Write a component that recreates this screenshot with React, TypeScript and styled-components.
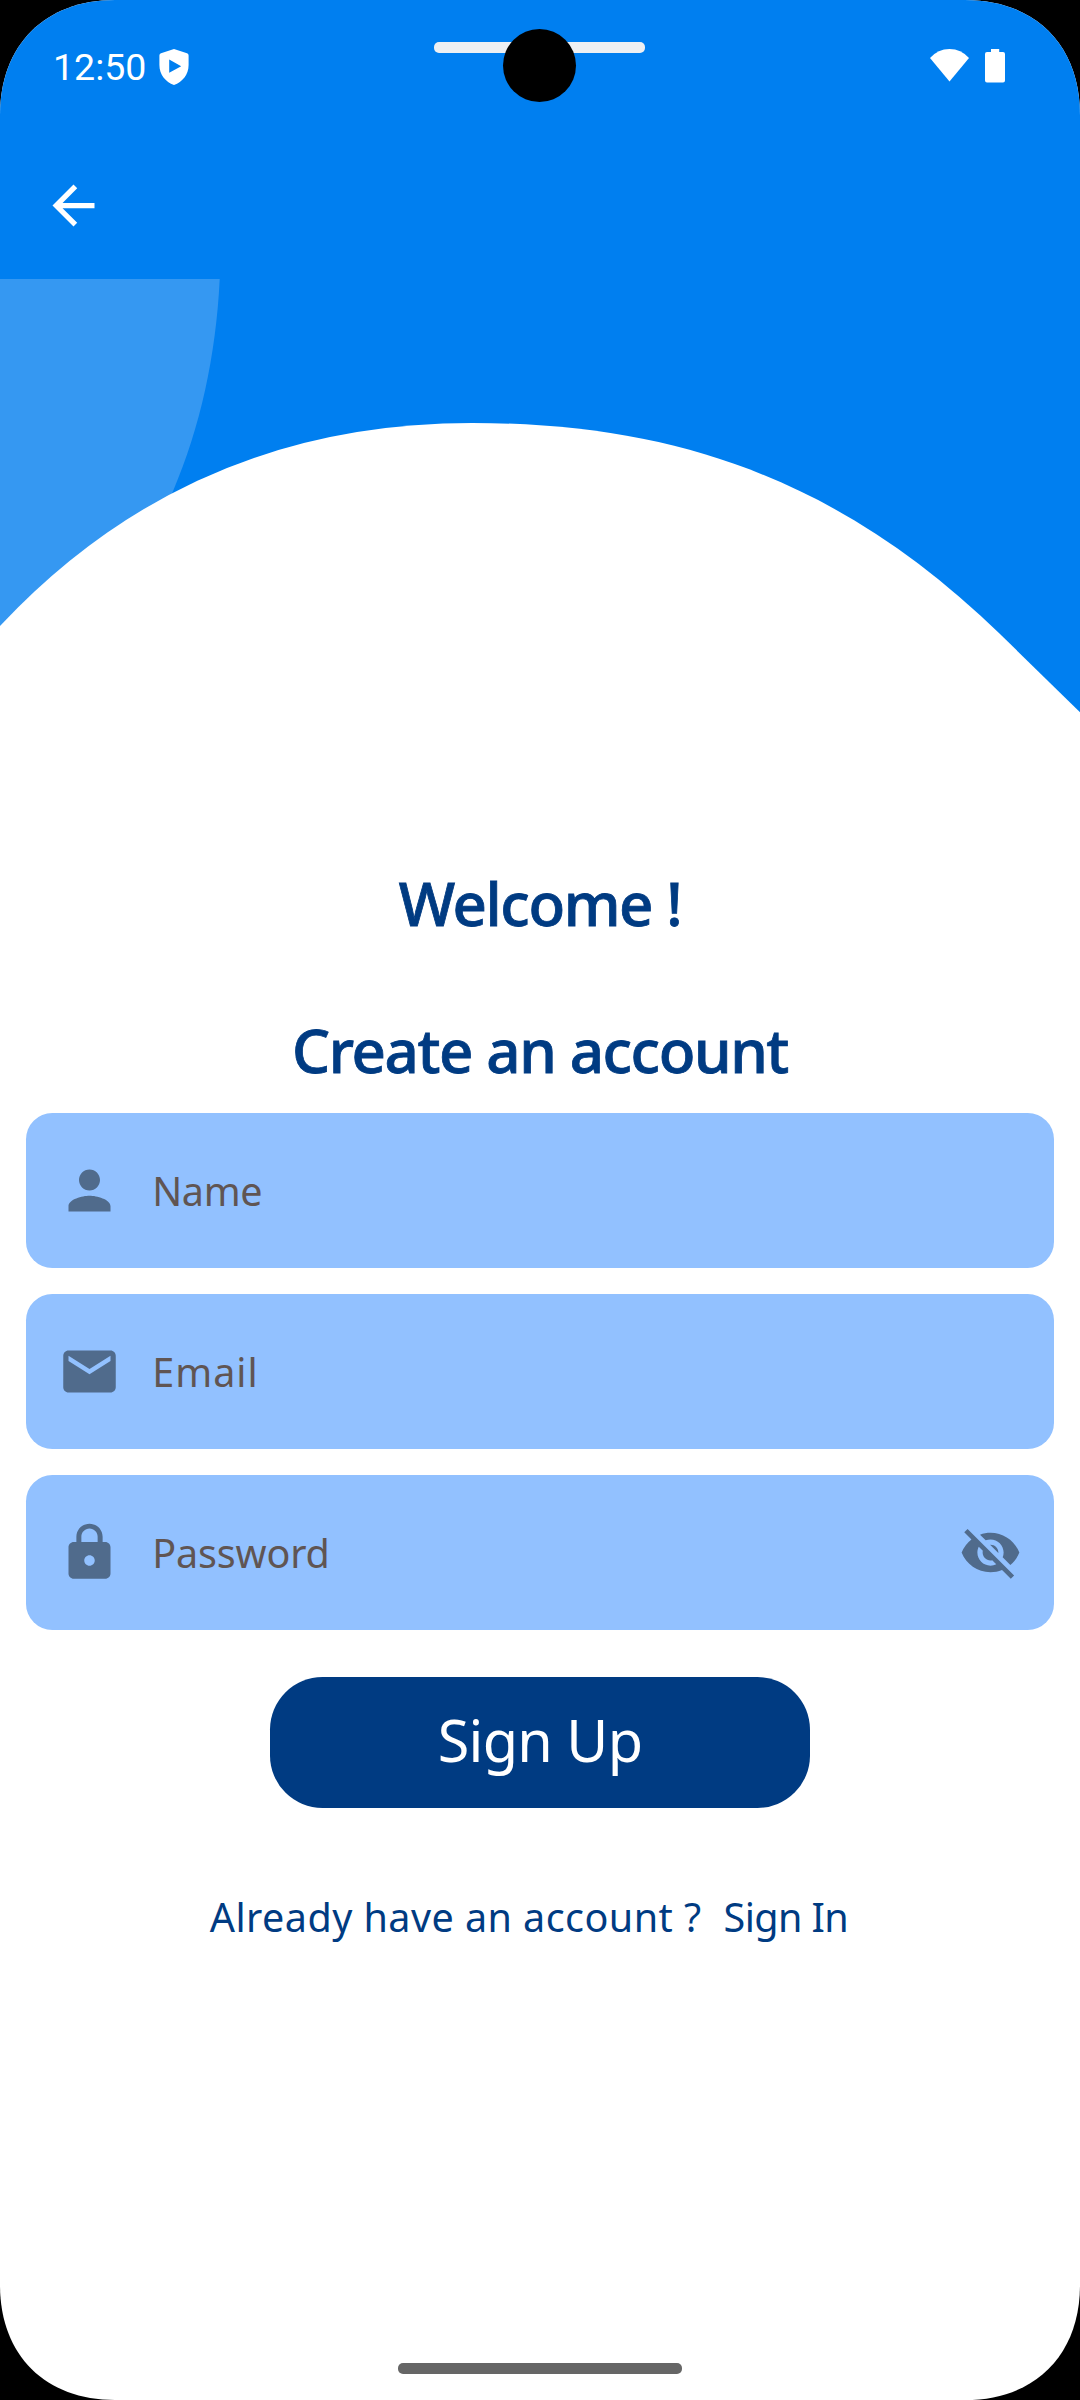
import React from "react";
import styled, { createGlobalStyle } from "styled-components";
import { MdArrowBack, MdPerson, MdEmail, MdLock, MdVisibilityOff } from "react-icons/md";

const color = {
  blue: "#007ff0",
  bubble: "#3598f2",
  navy: "#003b82",
  field: "#92c1ff",
  icon: "#506b8c",
  hint: "#605553",
};

const GlobalStyle = createGlobalStyle`
  *, *::before, *::after { box-sizing: border-box; }
  body { margin: 0; background: #000; }
`;

const Screen = styled.div`
  position: relative;
  display: flex;
  flex-direction: column;
  width: 1080px;
  height: 2400px;
  overflow: hidden;
  background: #fff;
  font-family: "Noto Sans", "Open Sans", sans-serif;
  clip-path: path("M115 0H965C1035 0 1080 45 1080 115V2285C1080 2355 1035 2400 965 2400H115C45 2400 0 2355 0 2285V115C0 45 45 0 115 0Z");
`;

const StatusBar = styled.header`
  display: flex;
  align-items: center;
  justify-content: space-between;
  height: 131px;
  padding: 0 75px 0 53px;
  background: ${color.blue};
`;

const StatusGroup = styled.div<{ $gap: number }>`
  display: flex;
  align-items: center;
  gap: ${(p) => p.$gap}px;
`;

const Clock = styled.span`
  padding-top: 2px;
  font: 400 37.5px/44px Roboto, sans-serif;
  color: #fff;
`;

const ShieldIcon = styled.svg`
  margin-top: 3px;
`;

const Speaker = styled.div`
  position: absolute;
  top: 42px;
  left: 434px;
  width: 211px;
  height: 11px;
  border-radius: 5px;
  background: #eef0f3;
`;

const Camera = styled.div`
  position: absolute;
  top: 29px;
  left: 503.3px;
  width: 73px;
  height: 73px;
  border-radius: 50%;
  background: #000;
`;

const AppBar = styled.nav`
  display: flex;
  align-items: center;
  height: 148px;
  padding-left: 42px;
  background: ${color.blue};
  color: #fff;
`;

const Wave = styled.svg`
  display: block;
  flex: none;
`;

const Content = styled.main`
  display: flex;
  flex-direction: column;
  align-items: center;
  padding: 149px 26.25px 0;
`;

const Title = styled.h1`
  margin: 0 0 65px;
  font-size: 60px;
  line-height: 82px;
  font-weight: 500;
  letter-spacing: -1.4px;
  -webkit-text-stroke: 0.8px ${color.navy};
  white-space: pre;
  color: ${color.navy};

  & + & {
    margin-bottom: 21.5px;
  }
`;

const Fields = styled.div`
  display: flex;
  flex-direction: column;
  gap: 26.2px;
  width: 100%;
`;

const FieldBox = styled.div`
  display: flex;
  align-items: center;
  height: 155px;
  border-radius: 26.25px;
  background: ${color.field};
  color: ${color.icon};
`;

const IconSlot = styled.div`
  display: flex;
  align-items: center;
  justify-content: center;
  width: 126px;
`;

const Hint = styled.span<{ $tracking: number }>`
  flex: 1;
  padding-top: 1px;
  font-size: 39.5px;
  line-height: 54px;
  letter-spacing: ${(p) => p.$tracking}px;
  color: ${color.hint};
`;

const SubmitButton = styled.button`
  width: 540px;
  height: 131.25px;
  margin-top: 47px;
  padding: 0 0 6px;
  border: 0;
  border-radius: 52.5px;
  background: ${color.navy};
  color: #fff;
  font-family: inherit;
  font-size: 57.5px;
  line-height: 78px;
  letter-spacing: -0.7px;
`;

const Footer = styled.div`
  display: flex;
  gap: 22px;
  align-self: flex-start;
  margin: 82px 0 0 183.5px;
  font-size: 39.5px;
  line-height: 54px;
  color: ${color.navy};
`;

const FooterText = styled.span<{ $tracking: number }>`
  letter-spacing: ${(p) => p.$tracking}px;
  white-space: pre;
`;

const HomeHandle = styled.div`
  align-self: center;
  width: 284px;
  height: 11px;
  margin: auto 0 26px;
  border-radius: 5px;
  background: #666;
`;

type FieldProps = {
  icon: React.ReactNode;
  label: string;
  tracking: number;
  trailing?: React.ReactNode;
};

const Field = ({ icon, label, tracking, trailing }: FieldProps) => (
  <FieldBox>
    <IconSlot>{icon}</IconSlot>
    <Hint $tracking={tracking}>{label}</Hint>
    {trailing && <IconSlot>{trailing}</IconSlot>}
  </FieldBox>
);

export default function App() {
  return (
    <>
      <GlobalStyle />
      <Screen>
        <StatusBar>
          <StatusGroup $gap={13}>
            <Clock>12:50</Clock>
            <ShieldIcon width="30" height="36" viewBox="0 0 30 36">
              <path
                fill="#fff"
                fillRule="evenodd"
                d="M15 0L28 4.2Q29.6 4.8 29.6 6.5V16C29.6 25.5 23.5 33 15 36C6.500 33 .4 25.500 .4 16V6.500Q.4 4.800 2 4.200ZM10.200 10.500V23.700L22.200 17.200Z"
              />
            </ShieldIcon>
          </StatusGroup>
          <StatusGroup $gap={16}>
            <svg width="39" height="33" viewBox="0 0 39 33">
              <path fill="#fff" d="M0 9Q8 0 19.500 0T39 9L19.500 32.500Z" />
            </svg>
            <svg width="20" height="34" viewBox="0 0 20 34">
              <path
                fill="#fff"
                d="M6 0H14.200V3H18Q20 3 20 5V31.500Q20 33.500 18 33.500H2Q0 33.500 0 31.500V5Q0 3 2 3H6Z"
              />
            </svg>
          </StatusGroup>
        </StatusBar>
        <Speaker />
        <Camera />
        <AppBar>
          <MdArrowBack size={63} />
        </AppBar>
        <Wave width="1080" height="434" viewBox="0 279 1080 434">
          <path fill={color.blue} d="M0 279H1080V713H0Z" />
          <path fill={color.bubble} d="M0 279H219.700C216 356 200 428 173.200 490.700L150 545L0 700Z" />
          <path fill="#fff" d="M0 626Q190 423 472 423C690 423 850 489 1000 634L1080 712.300V714H0Z" />
        </Wave>
        <Content>
          <Title>Welcome !</Title>
          <Title>Create an account</Title>
          <Fields>
            <Field icon={<MdPerson size={63} />} label="Name" tracking={-0.4} />
            <Field icon={<MdEmail size={63} />} label="Email" tracking={1} />
            <Field
              icon={<MdLock size={63} />}
              label="Password"
              tracking={-0.15}
              trailing={<MdVisibilityOff size={63} />}
            />
          </Fields>
          <SubmitButton>Sign Up</SubmitButton>
          <Footer>
            <FooterText $tracking={0.45}>Already have an account ?</FooterText>
            <FooterText $tracking={-0.6}>Sign In</FooterText>
          </Footer>
        </Content>
        <HomeHandle />
      </Screen>
    </>
  );
}
